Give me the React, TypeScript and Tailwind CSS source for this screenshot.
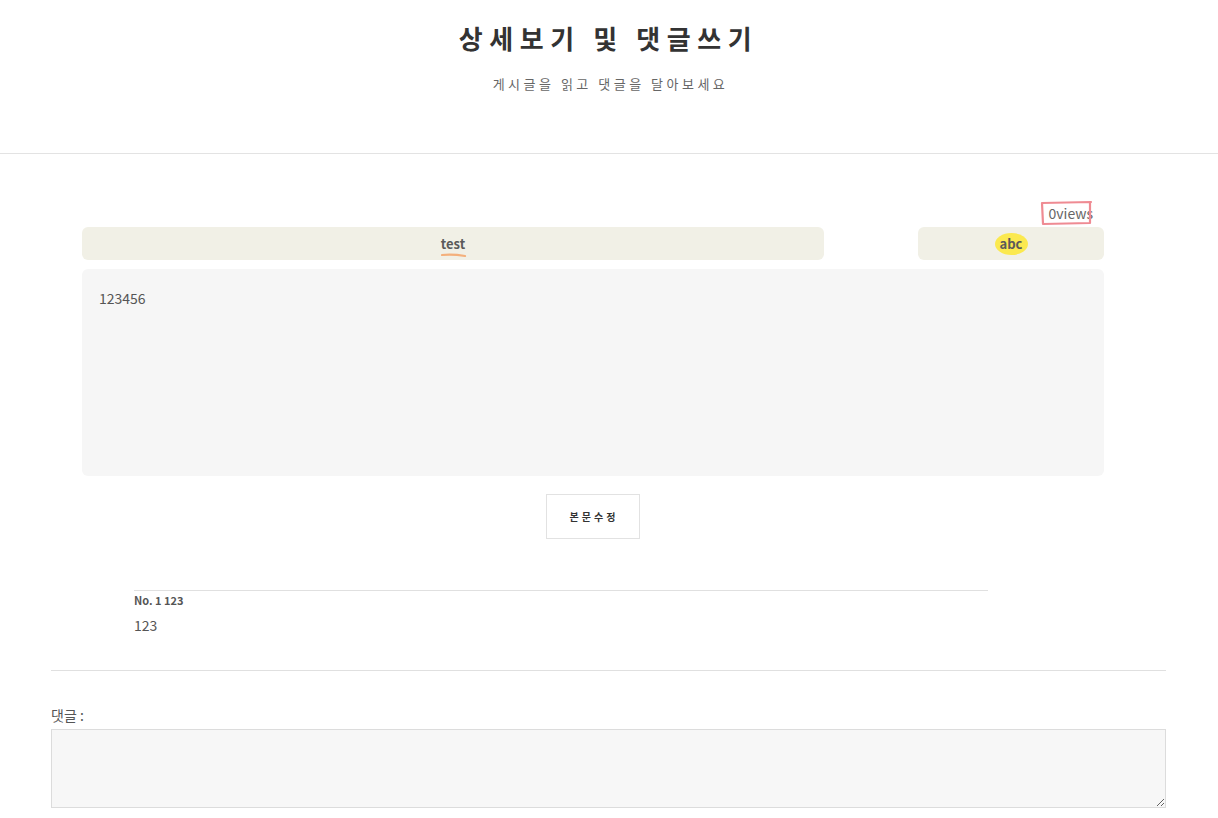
import React from "react";

const font = { fontFamily: '"Noto Sans CJK KR", "Noto Sans", sans-serif' };

export default function App() {
  return (
    <div className="min-h-[818px] w-full bg-white text-[#555]" style={font}>
      {/* header */}
      <header className="flex h-[154px] flex-col items-center border-b border-[#e3e3e3]">
        <h1 className="mt-[21px] pr-[1px] text-[26px] font-bold leading-[34px] tracking-[6.6px] text-[#333]">
          상세보기 및 댓글쓰기
        </h1>
        <p className="mt-[20px] pl-[3px] text-[13px] leading-[18px] tracking-[3.5px] text-[#666]">
          게시글을 읽고 댓글을 달아보세요
        </p>
      </header>

      <main className="pl-[51px] pr-[52px]">
        <div className="ml-[31px] mr-[62px]">
          {/* views */}
          <div className="mt-[47px] flex h-[24px] justify-end pr-[10px]">
            <div className="relative flex items-center pl-[7px] pr-[1px] text-[14px] leading-[20px] text-[#666]">
              <span>0views</span>
              <svg
                className="pointer-events-none absolute -left-[1px] -top-[1px] h-[26px] w-[53px]"
                viewBox="0 0 53 26"
                fill="none"
              >
                <path
                  d="M2 3 L51 2 M2 3 L3 24 L50 23 L50 2"
                  stroke="#ef8b93"
                  strokeWidth="2.2"
                  strokeLinecap="round"
                  strokeLinejoin="round"
                />
              </svg>
            </div>
          </div>

          {/* title row */}
          <div className="mt-[2px] flex h-[33px] justify-between">
            <div className="flex w-[742px] items-center justify-center rounded-[6px] bg-[#f1f0e6]">
              <span className="relative text-[13px] font-bold text-[#5a5a5a]">
                test
                <svg
                  className="absolute -bottom-[5px] left-0 h-[5px] w-[26px]"
                  viewBox="0 0 26 5"
                  fill="none"
                >
                  <path d="M1 2 Q12 1 24 3" stroke="#f4b07c" strokeWidth="2.2" strokeLinecap="round" />
                </svg>
              </span>
            </div>
            <div className="flex w-[186px] items-center justify-center rounded-[6px] bg-[#f1f0e6]">
              <span className="relative text-[13px] font-bold text-[#5a5a5a]">
                <span className="absolute -left-[5px] -top-[1px] h-[22px] w-[33px] rounded-[50%] bg-[#fbe94f]" />
                <span className="relative">abc</span>
              </span>
            </div>
          </div>

          {/* body */}
          <div className="mt-[9px] h-[207px] rounded-[6px] bg-[#f6f6f6] px-[17px] pt-[19px] text-[14px] leading-[20px] text-[#555]">
            123456
          </div>

          {/* button */}
          <div className="mt-[18px] flex justify-center pr-[1px]">
            <button className="h-[45px] w-[94px] border border-[#e2e2e2] bg-white pl-[3px] text-[10px] font-bold tracking-[3px] text-[#333]">
              본문수정
            </button>
          </div>

          {/* comments list */}
          <div className="ml-[52px] mr-[116px] mt-[51px] border-t border-[#e0e0e0] pt-[2px]">
            <div className="text-[11px] font-bold leading-[15px] text-[#555]">No. 1 123</div>
            <div className="mt-[7px] text-[14px] leading-[20px] text-[#555]">123</div>
          </div>
        </div>

        {/* divider */}
        <div className="mt-[35px] border-t border-[#e0e0e0]" />

        {/* comment form */}
        <div className="mt-[34px]">
          <label className="block text-[14px] leading-[20px] text-[#555]">댓글 :</label>
          <textarea className="mt-[4px] block h-[79px] w-full resize-y border border-[#dcdcdc] bg-[#f7f7f7] outline-none" />
        </div>
      </main>
    </div>
  );
}
